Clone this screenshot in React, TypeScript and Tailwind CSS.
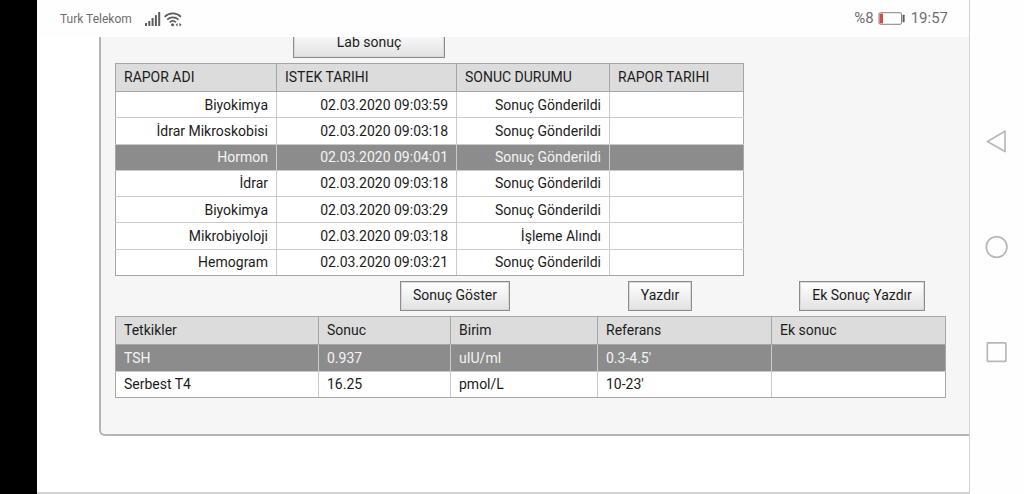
import type { ReactNode } from "react";

const reports = [
  ["Biyokimya", "02.03.2020 09:03:59", "Sonuç Gönderildi"],
  ["İdrar Mikroskobisi", "02.03.2020 09:03:18", "Sonuç Gönderildi"],
  ["Hormon", "02.03.2020 09:04:01", "Sonuç Gönderildi"],
  ["İdrar", "02.03.2020 09:03:18", "Sonuç Gönderildi"],
  ["Biyokimya", "02.03.2020 09:03:29", "Sonuç Gönderildi"],
  ["Mikrobiyoloji", "02.03.2020 09:03:18", "İşleme Alındı"],
  ["Hemogram", "02.03.2020 09:03:21", "Sonuç Gönderildi"],
];

const results = [
  ["TSH", "0.937", "uIU/ml", "0.3-4.5'", ""],
  ["Serbest T4", "16.25", "pmol/L", "10-23'", ""],
];

function FormButton({ children, className }: { children: ReactNode; className: string }) {
  return (
    <button
      type="button"
      className={`h-[30px] shrink-0 border border-[#8c8c8c] bg-linear-to-b from-white to-[#e2e2e2] pb-0.5 text-center whitespace-nowrap shadow-[inset_0_0_0_1px_#d8d8d8] ${className}`}
    >
      {children}
    </button>
  );
}

type TableProps = {
  label: string;
  headers: string[];
  widths: string[];
  rows: string[][];
  selected: number;
  align: string;
  className: string;
};

function DataTable({ label, headers, widths, rows, selected, align, className }: TableProps) {
  return (
    <table
      aria-label={label}
      className={`table-fixed border-collapse border border-[#a6a6a6] bg-white ${className}`}
    >
      <thead>
        <tr className="h-7 bg-[#dcdcdc]">
          {headers.map((h, i) => (
            <th
              key={h}
              scope="col"
              className={`border border-[#a6a6a6] px-2 pb-0.5 text-left font-normal whitespace-nowrap ${widths[i]}`}
            >
              {h}
            </th>
          ))}
        </tr>
      </thead>
      <tbody>
        {rows.map((row, r) => (
          <tr
            key={r}
            className={`last:*:border-b-[#a6a6a6] ${r === selected ? "bg-[#8c8c8c] text-[#f4f4f4]" : ""}`}
          >
            {headers.map((h, c) => (
              <td
                key={h}
                className={`border border-[#cacaca] px-2 whitespace-nowrap first:border-l-[#a6a6a6] last:border-r-[#a6a6a6] ${align}`}
              >
                {row[c] ?? ""}
              </td>
            ))}
          </tr>
        ))}
      </tbody>
    </table>
  );
}

function StatusBar() {
  return (
    <header className="flex h-[37px] shrink-0 items-center justify-between bg-[#fefefe] pr-[21px] pl-[23px] pt-px text-[#6e6e6e]">
      <div className="flex items-center">
        <span className="w-[75px] text-xs whitespace-nowrap">Turk Telekom</span>
        <svg className="ml-[10px]" width="16" height="14" viewBox="0 0 16 14" fill="#5c5c5c" aria-label="Sinyal">
          <rect x="0" y="11" width="2" height="3" />
          <rect x="3.3" y="9" width="2" height="5" />
          <rect x="6.6" y="6" width="2" height="8" />
          <rect x="9.9" y="3.2" width="2" height="10.8" />
          <rect x="13.2" y="0" width="2" height="14" />
        </svg>
        <svg className="ml-[3px]" width="18" height="15" viewBox="0 0 18 15" fill="none" stroke="#5c5c5c" strokeWidth="1.7" aria-label="Wi-Fi">
          <path d="M.6 4.8C5.3.3 12.4.3 17 4.8" />
          <path d="M3.2 7.7c3.2-3 8-3 11.2 0" />
          <path d="M5.7 10.3c1.8-1.6 4.4-1.6 6.2 0" />
          <circle cx="8.6" cy="12.8" r="1.5" fill="#5c5c5c" stroke="none" />
          <path d="M11.6 12.7l2-1.7v3.4zM17.6 12.7l-2.2-1.9v3.8z" fill="#5c5c5c" stroke="none" />
        </svg>
      </div>
      <div className="flex items-center text-[15px]">
        <span>%8</span>
        <svg className="mr-[6px] ml-1" width="27" height="13" viewBox="0 0 27 13" aria-label="Pil">
          <rect x="1" y=".7" width="22.5" height="11.6" rx="1.5" fill="white" stroke="#8c7f7f" />
          <rect x="1.6" y="1.6" width="3.4" height="9.8" fill="#dc4b43" />
          <rect x="24.6" y="2.8" width="2" height="7.5" rx=".5" fill="#5c5c5c" />
        </svg>
        <time>19:57</time>
      </div>
    </header>
  );
}

function NavigationBar() {
  return (
    <nav className="flex w-[54px] shrink-0 flex-col items-center gap-[82px] bg-[#fefefe] pt-[130px]">
      <button type="button" aria-label="Geri">
        <svg className="block" width="24" height="24" viewBox="0 0 24 24" fill="none" stroke="#b8b8b8" strokeWidth="1.7" strokeLinejoin="round">
          <path d="M2.4 11.4L20 1.2v20.4z" />
        </svg>
      </button>
      <button type="button" aria-label="Ana ekran">
        <svg className="block" width="24" height="24" viewBox="0 0 24 24" fill="none" stroke="#b8b8b8" strokeWidth="1.7">
          <circle cx="11.6" cy="11" r="10.3" />
        </svg>
      </button>
      <button type="button" aria-label="Son uygulamalar">
        <svg className="block" width="24" height="24" viewBox="0 0 24 24" fill="none" stroke="#b8b8b8" strokeWidth="1.7">
          <rect x="2.3" y="0.9" width="18.6" height="18.4" rx=".6" />
        </svg>
      </button>
    </nav>
  );
}

export default function App() {
  return (
    <div className="flex h-screen overflow-hidden bg-black font-['Roboto',sans-serif] text-sm text-[#1c1c1c]">
      <div className="w-[37px] shrink-0 bg-black" />
      <div className="flex min-w-0 flex-1 flex-col border-r border-b-2 border-[#d2d2d2] bg-white">
        <StatusBar />
        <main className="min-h-0 flex-1 overflow-hidden pl-[62px]">
          <section className="-mt-[9px] flex flex-col items-start gap-[5px] rounded-bl-md border-b-2 border-l-2 border-[#b4b4b4] bg-[#f6f6f6] pr-[23px] pb-9 pl-[14px]">
            <FormButton className="ml-[178px] w-[152px]">Lab sonuç</FormButton>
            <DataTable
              label="Raporlar"
              headers={["RAPOR ADI", "ISTEK TARIHI", "SONUC DURUMU", "RAPOR TARIHI"]}
              widths={["w-[161px]", "w-[180px]", "w-[153px]", "w-[134px]"]}
              rows={reports}
              selected={2}
              align="text-right"
              className="h-[213px] w-[628px]"
            />
            <div className="flex w-full pl-[285px]">
              <FormButton className="w-[110px]">Sonuç Göster</FormButton>
              <FormButton className="ml-[118px] w-16">Yazdır</FormButton>
              <FormButton className="ml-[107px] w-[126px]">Ek Sonuç Yazdır</FormButton>
            </div>
            <DataTable
              label="Tetkik sonuçları"
              headers={["Tetkikler", "Sonuc", "Birim", "Referans", "Ek sonuc"]}
              widths={["w-[203px]", "w-[132px]", "w-[147px]", "w-[174px]", ""]}
              rows={results}
              selected={0}
              align="text-left"
              className="h-[82px] w-full"
            />
          </section>
        </main>
      </div>
      <NavigationBar />
    </div>
  );
}
